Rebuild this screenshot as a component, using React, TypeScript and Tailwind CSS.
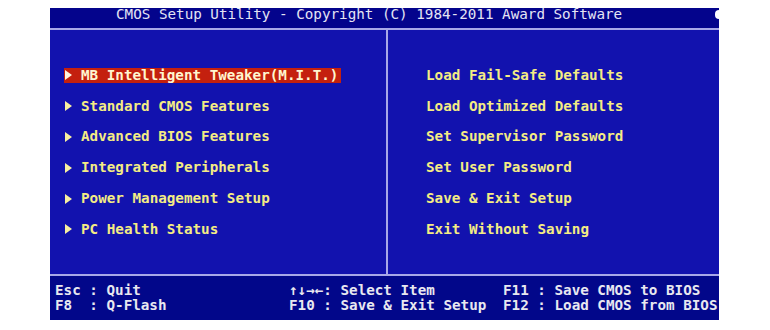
import React from "react";

const leftItems = [
  "MB Intelligent Tweaker(M.I.T.)",
  "Standard CMOS Features",
  "Advanced BIOS Features",
  "Integrated Peripherals",
  "Power Management Setup",
  "PC Health Status",
];

const rightItems = [
  "Load Fail-Safe Defaults",
  "Load Optimized Defaults",
  "Set Supervisor Password",
  "Set User Password",
  "Save & Exit Setup",
  "Exit Without Saving",
];

function Arrow({ color }: { color: string }) {
  return (
    <svg width="7" height="10" viewBox="0 0 7 10" className="shrink-0">
      <polygon points="0,0 7,5 0,10" fill={color} />
    </svg>
  );
}

export default function App() {
  return (
    <div
      className="w-[770px] h-[330px] bg-white pt-[8px] pl-[50px]"
      style={{ fontFamily: '"DejaVu Sans Mono", "Liberation Mono", monospace' }}
    >
      <div className="w-[669px] h-[312px] flex flex-col bg-[#1212ae] text-[14.25px] font-bold">
        {/* Title bar */}
        <div className="h-[19px] bg-[#04048c] flex items-start pt-[0px] pl-[66px] text-[#e4e4f4] whitespace-pre">
          <span className="leading-[13px] font-normal">CMOS Setup Utility - Copyright (C) 1984-2011 Award Software</span>
          <span className="ml-auto mt-[2px] w-[4px] h-[9px] rounded-l-full bg-white" />
        </div>
        <div className="h-[1px] bg-[#04048c]" />
        <div className="h-[2px] bg-[#a8a8e8]" />
        {/* Main */}
        <div className="flex h-[244px]">
          <div className="w-[336px] pt-[30px] flex flex-col">
            {leftItems.map((t, i) => (
              <div key={t} className="h-[30.8px] flex items-center pl-[14px]">
                {i === 0 ? (
                  <div className="h-[15px] flex items-center bg-[#c4200e] pl-[1px] pr-[3px] text-[#fff6d0]">
                    <Arrow color="#fff6e0" />
                    <span className="ml-[9px] whitespace-pre leading-[15px]">{t}</span>
                  </div>
                ) : (
                  <div className="h-[15px] flex items-center pl-[1px] text-[#f4ec84]">
                    <Arrow color="#f8f0a0" />
                    <span className="ml-[9px] whitespace-pre leading-[15px]">{t}</span>
                  </div>
                )}
              </div>
            ))}
          </div>
          <div className="w-[2px] bg-[#a8a8e8]" />
          <div className="flex-1 pt-[30px] pl-[38px] flex flex-col">
            {rightItems.map((t) => (
              <div key={t} className="h-[30.8px] flex items-center text-[#f4ec84] whitespace-pre">
                {t}
              </div>
            ))}
          </div>
        </div>
        <div className="h-[2px] bg-[#a8a8e8]" />
        {/* Footer */}
        <div className="flex-1 bg-[#02078a] flex items-center pl-[5px] text-[#e8e8f0] whitespace-pre leading-[15px]">
          <div className="w-[234px] flex flex-col">
            <span>Esc : Quit</span>
            <span>F8  : Q-Flash</span>
          </div>
          <div className="w-[214px] flex flex-col">
            <span>↑↓→←: Select Item</span>
            <span>F10 : Save &amp; Exit Setup</span>
          </div>
          <div className="flex flex-col">
            <span>F11 : Save CMOS to BIOS</span>
            <span>F12 : Load CMOS from BIOS</span>
          </div>
        </div>
      </div>
    </div>
  );
}
